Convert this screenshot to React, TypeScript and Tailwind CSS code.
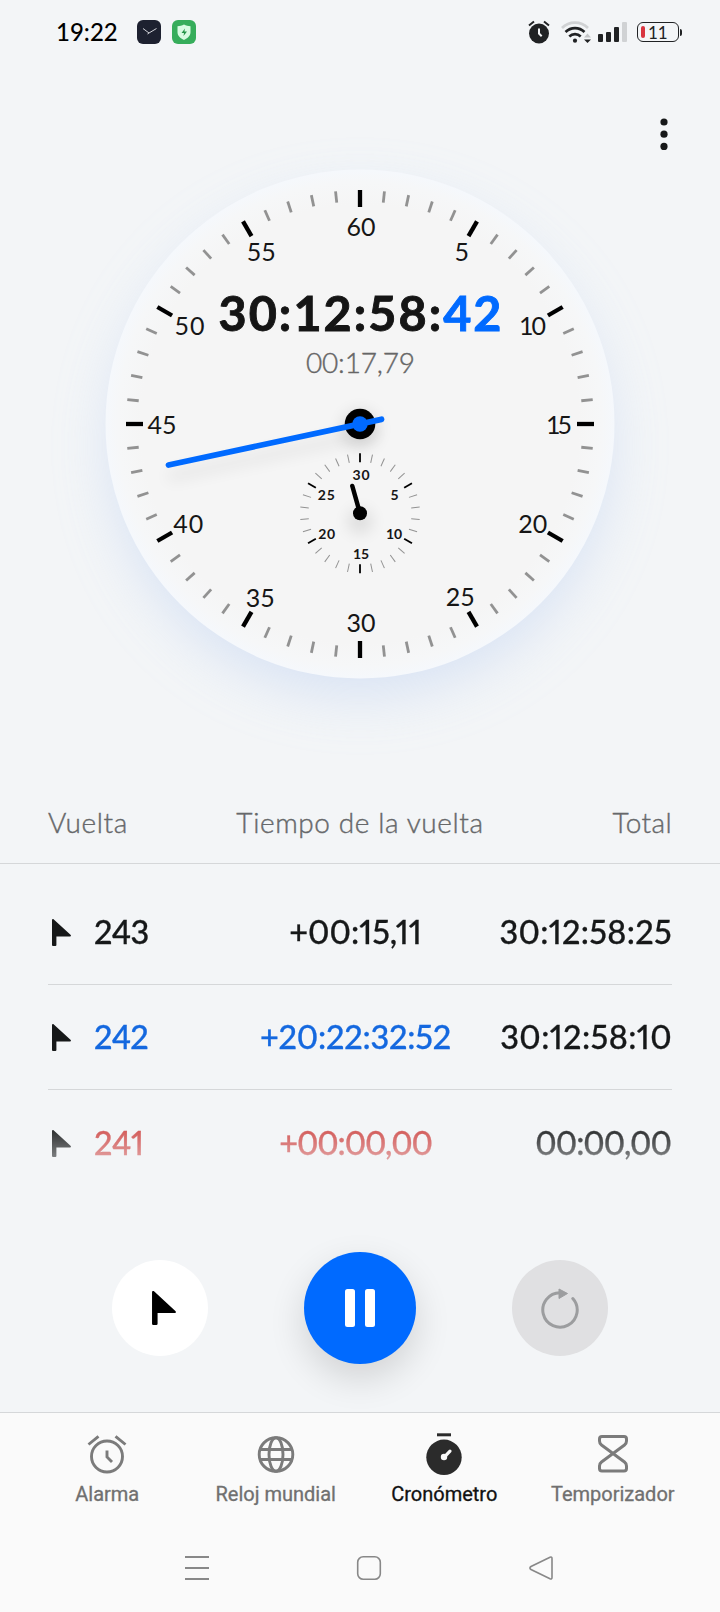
import React from 'react';

type Mark = { text: string; x: number; y: number; width: number };

// Dial coordinates: the svg is 720x610, the main hub sits at (360, 264)
const CX = 360;
const CY = 264;
const SUB_CY = 353.3;

const dialNumbers: Mark[] = [
  { text: '60', x: 361, y: 67.3, width: 29 },
  { text: '5', x: 461.7, y: 92.3, width: 14 },
  { text: '10', x: 532.5, y: 166.3, width: 27 },
  { text: '15', x: 559, y: 265.3, width: 26 },
  { text: '20', x: 532.7, y: 364.3, width: 29 },
  { text: '25', x: 460.3, y: 437.3, width: 29 },
  { text: '30', x: 361, y: 463.3, width: 29 },
  { text: '35', x: 260.3, y: 438.3, width: 29 },
  { text: '40', x: 188.3, y: 364.3, width: 30 },
  { text: '45', x: 162, y: 265.3, width: 29 },
  { text: '50', x: 189.5, y: 166.3, width: 30 },
  { text: '55', x: 261.3, y: 92.3, width: 29 },
];

const subNumbers: Mark[] = [
  { text: '30', x: 361, y: 315.2, width: 17 },
  { text: '5', x: 394.5, y: 335.3, width: 8 },
  { text: '10', x: 394, y: 374.3, width: 16 },
  { text: '15', x: 361, y: 394.3, width: 16 },
  { text: '20', x: 326.7, y: 374.3, width: 17 },
  { text: '25', x: 326.3, y: 335.3, width: 17 },
];

const laps = [
  { id: 1, lap: '243', time: '+00:15,11', total: '30:12:58:25', color: 'text-[#161819]', lapTracking: 'tracking-[-0.5px]', timeTracking: 'tracking-[0px]', totalTracking: 'tracking-[0.3px]' },
  { id: 2, lap: '242', time: '+20:22:32:52', total: '30:12:58:10', color: 'text-[#1468df]', lapTracking: 'tracking-[-0.5px]', timeTracking: 'tracking-[-0.2px]', totalTracking: 'tracking-[0.4px]' },
  { id: 3, lap: '241', time: '+00:00,00', total: '00:00,00', color: 'text-[#cf4a48]', lapTracking: 'tracking-[-0.2px]', timeTracking: 'tracking-[-1.1px]', totalTracking: 'tracking-[-1px] mr-px' },
];

function StatusBar() {
  return (
    <header className="flex h-16 items-center pl-14 pr-[38px]">
      <span className="w-[81px] text-[24px] leading-none font-medium text-black">19:22</span>
      <svg className="mr-[11px]" width="24" height="24" viewBox="0 0 24 24" fill="none">
        <rect width="24" height="24" rx="6" fill="#1d2130" />
        <path d="M6 8.5 12 13 19.5 8.5M12 13l-1.5 1" stroke="#e5e7eb" strokeWidth="0.9" />
      </svg>
      <svg width="24" height="24" viewBox="0 0 24 24" fill="none">
        <rect width="24" height="24" rx="6" fill="#36ad5b" />
        <path d="M12 4.500c2 1.500 4.200 1.500 6.500 1.800v6c0 3.700-2.800 6-6.500 7.700-3.700-1.700-6.500-4-6.500-7.700v-6c2.300-.3 4.500-.3 6.500-1.800Z" fill="#d8fbe2" />
        <path d="M13 8.500 9.500 13H12l-.5 3L15 11.500h-2.600Z" fill="#239447" />
      </svg>

      <div className="ml-auto flex items-center">
        <svg className="mr-[11px]" width="22" height="24" viewBox="0 0 22 24" fill="none">
          <circle cx="11" cy="13.500" r="10" fill="#202224" />
          <path d="M1 5.500 6 1.500M21 5.500l-5-4" stroke="#202224" strokeWidth="2" />
          <path d="M11 8.500v5l2.700 2.700" stroke="#f3f5f7" strokeWidth="2" />
        </svg>
        <svg className="mr-[7px]" width="30" height="24" viewBox="0 0 30 24" fill="none">
          <path d="M1 8a18.500 18.500 0 0 1 26 0" stroke="#d0d2d4" strokeWidth="2.800" />
          <path d="M4.500 12a13.500 13.500 0 0 1 19 0M8.300 16.500a8 8 0 0 1 11.400 0" stroke="#202224" strokeWidth="2.600" />
          <circle cx="14" cy="20.700" r="2.100" fill="#202224" />
          <path d="M23 17.500 26.500 13.500l3.500 4Z" fill="#c4c6c8" />
          <path d="M23 19.500h7l-3.500 3.500Z" fill="#202224" />
        </svg>
        <svg className="mr-[10px]" width="29" height="22" viewBox="0 0 29 22">
          <rect x="0" y="13" width="5" height="8" rx="1" fill="#202224" />
          <rect x="8" y="11" width="5" height="10" rx="1" fill="#202224" />
          <rect x="16" y="6" width="5" height="15" rx="1" fill="#202224" />
          <rect x="24" y="1" width="5" height="20" rx="1" fill="#d0d2d4" />
        </svg>
        <div className="flex h-5 w-[42px] items-center rounded-[6px] border-[1.5px] border-[#202224] pl-[2.5px]">
          <span className="h-3 w-[4.5px] rounded-[2px] bg-[#d8343f]" />
          <span className="ml-[3px] text-[17px] leading-none text-[#202224]">11</span>
        </div>
        <span className="ml-px h-[7px] w-[2px] rounded-r bg-[#202224]" />
      </div>
    </header>
  );
}

function Ticks({ count, cy, outer, major, minor, majorWidth, minorWidth }: {
  count: number; cy: number; outer: number; major: number; minor: number; majorWidth: number; minorWidth: number;
}) {
  return (
    <g>
      {Array.from({ length: count }, (_, i) => {
        const isMajor = i % 5 === 0;
        return (
          <line
            key={i}
            x1={CX}
            x2={CX}
            y1={cy - outer}
            y2={cy - outer + (isMajor ? major : minor)}
            stroke={isMajor ? '#000000' : '#929292'}
            strokeWidth={isMajor ? majorWidth : minorWidth}
            transform={`rotate(${(i * 360) / count} ${CX} ${cy})`}
          />
        );
      })}
    </g>
  );
}

function Dial() {
  return (
    <svg className="block overflow-visible" width="720" height="610" viewBox="0 0 720 610">
      <defs>
        <radialGradient id="face">
          <stop offset="0.86" stopColor="#f5f5f5" />
          <stop offset="0.95" stopColor="#f6f7f8" />
          <stop offset="1" stopColor="#f5f8fc" />
        </radialGradient>
        <filter id="glow" x="-30%" y="-30%" width="160%" height="160%">
          <feGaussianBlur stdDeviation="28" />
        </filter>
        <filter id="soft" x="-100%" y="-100%" width="300%" height="300%">
          <feGaussianBlur stdDeviation="8" />
        </filter>
      </defs>

      <circle cx={CX} cy={CY + 22} r="248" fill="#cddbf3" opacity="0.75" filter="url(#glow)" />
      <circle cx={CX} cy={CY} r="254.500" fill="url(#face)" />

      <Ticks count={60} cy={CY} outer={234} major={17} minor={11.5} majorWidth={4.3} minorWidth={2.8} />
      <g fontSize="25" fill="#161616" textAnchor="middle">
        {dialNumbers.map((n) => (
          <text key={n.text} x={n.x} y={n.y + 9} textLength={n.width}>{n.text}</text>
        ))}
      </g>

      <text x="218.500" y="171" fontSize="48.500" fontWeight="700" fill="#151515" stroke="#151515" strokeWidth="0.900" textLength="283">
        30:12:58:<tspan fill="#006aff" stroke="#006aff">42</tspan>
      </text>
      <text x="306" y="213" fontSize="28" fontWeight="300" fill="#666666" stroke="#666666" strokeWidth="0.400" textLength="109">00:17,79</text>

      {/* Minutes sub dial */}
      <Ticks count={30} cy={SUB_CY} outer={60} major={9} minor={8.5} majorWidth={1.8} minorWidth={1} />
      <g fontSize="14" fontWeight="700" fill="#161616" textAnchor="middle">
        {subNumbers.map((n) => (
          <text key={n.text} x={n.x} y={n.y + 5} textLength={n.width}>{n.text}</text>
        ))}
      </g>
      <circle cx={CX} cy={SUB_CY + 8} r="12" fill="#000000" opacity="0.1" filter="url(#soft)" />
      <line x1={CX} y1={SUB_CY} x2="352.300" y2="326" stroke="#000000" strokeWidth="4.500" strokeLinecap="round" />
      <circle cx={CX} cy={SUB_CY} r="7" fill="#000000" />

      {/* Seconds hand */}
      <line x1="168" y1="317" x2="376" y2="272" stroke="#000000" strokeWidth="8" opacity="0.08" filter="url(#soft)" />
      <circle cx={CX} cy={CY + 5} r="18" fill="#000000" opacity="0.12" filter="url(#soft)" />
      <circle cx={CX} cy={CY} r="15.300" fill="#000000" />
      <circle cx={CX} cy={CY} r="7.700" fill="#006aff" />
      <line x1="168.500" y1="305" x2="381.500" y2="259.300" stroke="#006aff" strokeWidth="5.800" strokeLinecap="round" />
    </svg>
  );
}

function Flag({ className }: { className: string }) {
  return (
    <svg className={className} viewBox="0 0 19 27" fill="currentColor">
      <path d="M0 1C0 0 1 -.3 1.800 .4L18.500 15.800C19.300 16.600 19 17.500 18 17.500H4.400V26Q4.400 27 3.400 27H1Q0 27 0 26Z" />
    </svg>
  );
}

function LapList() {
  return (
    <section className="proportional-nums">
      <div className="grid h-[94px] grid-cols-[150px_1fr_150px] items-center border-b border-[#d5d7d9] px-12 pt-[10px] text-[28px] font-light text-[#66686a] [-webkit-text-stroke:0.4px_#66686a]">
        <span className="tracking-[0.6px]">Vuelta</span>
        <span className="text-center tracking-[0.6px] whitespace-nowrap">Tiempo de la vuelta</span>
        <span className="text-right tracking-[0.4px]">Total</span>
      </div>
      <div className="h-[326px] overflow-hidden px-12 pt-4 [mask-image:linear-gradient(to_bottom,black_258px,transparent_334px)]">
        {laps.map((l) => (
          <div key={l.id} className="flex h-[105px] items-center border-b border-[#d5d7d9] pt-px text-[32.5px] font-medium text-[#161819] last:border-b-0">
            <Flag className="ml-1 h-[27px] w-[19px] shrink-0" />
            <span className={`ml-[23px] w-[121px] shrink-0 [-webkit-text-stroke:0.3px_currentColor] ${l.lapTracking} ${l.color}`}>{l.lap}</span>
            <span className={`w-[281px] shrink-0 text-center whitespace-nowrap [-webkit-text-stroke:0.3px_currentColor] ${l.timeTracking} ${l.color}`}>{l.time}</span>
            <span className={`ml-auto whitespace-nowrap [-webkit-text-stroke:0.3px_currentColor] ${l.totalTracking}`}>{l.total}</span>
          </div>
        ))}
      </div>
    </section>
  );
}

function Controls() {
  return (
    <div className="flex h-[222px] items-center justify-between px-28 pt-[14px]">
      <button className="flex size-24 items-center justify-center rounded-full bg-white text-black">
        <Flag className="ml-2 h-[34px] w-6" />
      </button>
      <button className="flex size-28 items-center justify-center gap-[10px] rounded-full bg-[#006aff] shadow-[0_14px_36px_rgba(0,0,0,0.14)]">
        <span className="h-[38px] w-[10px] rounded-[2.5px] bg-white" />
        <span className="h-[38px] w-[10px] rounded-[2.5px] bg-white" />
      </button>
      <button className="flex size-24 items-center justify-center rounded-full bg-[#e0e0e2]">
        <svg width="44" height="44" viewBox="0 0 44 44" fill="none">
          <path d="M34.800 12.500A17.200 17.200 0 1 1 22 6.800" stroke="#9c9d9f" strokeWidth="3" strokeLinecap="round" />
          <path d="M21 3 29.500 7.500 21 12.500Z" fill="#9c9d9f" stroke="#9c9d9f" strokeWidth="1" strokeLinejoin="round" />
        </svg>
      </button>
    </div>
  );
}

function TabBar() {
  return (
    <nav className="grid h-[111px] grid-cols-4 border-t border-[#d5d7d9] px-[23px] pt-5 font-['Roboto',sans-serif] text-[20px] text-[#707070] [-webkit-text-stroke:0.3px_currentColor]">
      <div className="flex flex-col items-center">
        <svg width="44" height="44" viewBox="0 0 44 44" fill="none" stroke="#7b7b7b" strokeWidth="2.900">
          <circle cx="22" cy="23.500" r="15.500" />
          <path d="M22 17.500v6.500l5 5" />
          <path d="M3.500 11.500 13.500 3.300M40.500 11.500 30.500 3.300" />
        </svg>
        <span className="mt-[5px] leading-6">Alarma</span>
      </div>
      <div className="flex flex-col items-center">
        <svg width="44" height="44" viewBox="0 0 44 44" fill="none" stroke="#7b7b7b" strokeWidth="2.900">
          <circle cx="22" cy="21.500" r="16.800" />
          <ellipse cx="22" cy="21.500" rx="7" ry="16.800" />
          <path d="M6 16.500h32M6 26.500h32" />
        </svg>
        <span className="mt-[5px] leading-6">Reloj mundial</span>
      </div>
      <div className="flex flex-col items-center text-[#111111]">
        <svg width="44" height="44" viewBox="0 0 44 44" fill="none">
          <path d="M15 1.800h14" stroke="#2b2b2b" strokeWidth="3" />
          <circle cx="22" cy="24.300" r="17.700" fill="#2b2b2b" />
          <path d="M22 24.300 28 18.100" stroke="#fafafa" strokeWidth="3.200" strokeLinecap="round" />
          <circle cx="22" cy="24" r="3.200" fill="#fafafa" />
        </svg>
        <span className="mt-[5px] leading-6">Cronómetro</span>
      </div>
      <div className="flex flex-col items-center">
        <svg width="44" height="44" viewBox="0 0 44 44" fill="none" stroke="#7b7b7b" strokeWidth="3" strokeLinejoin="round">
          <path d="M11 3.500H33Q35.500 3.500 35.500 6V8Q35.500 10.500 33.500 12L10.500 29Q8.500 30.500 8.500 33V35.500Q8.500 38 11 38H33Q35.500 38 35.500 35.500V33Q35.500 30.500 33.500 29L10.500 12Q8.500 10.500 8.500 8V6Q8.500 3.500 11 3.500Z" />
        </svg>
        <span className="mt-[5px] leading-6">Temporizador</span>
      </div>
    </nav>
  );
}

function SystemNav() {
  return (
    <div className="flex h-[89px] items-center justify-between pr-[166px] pl-[184px]">
      <svg width="26" height="26" viewBox="0 0 26 26" fill="none" stroke="#888888" strokeWidth="1.800">
        <path d="M1 2h24M1 13h24M1 24h24" />
      </svg>
      <svg width="26" height="26" viewBox="0 0 26 26" fill="none" stroke="#888888" strokeWidth="1.600">
        <rect x="1.700" y="1.700" width="22.600" height="22.600" rx="5.500" />
      </svg>
      <svg width="26" height="26" viewBox="0 0 26 26" fill="none" stroke="#888888" strokeWidth="1.600">
        <path d="M22 2.200Q24 1.500 24 3.500V22.500Q24 24.500 22 23.700L3 14.500Q.8 13 3 11.500Z" />
      </svg>
    </div>
  );
}

export default function App() {
  return (
    <div className="flex h-[1612px] w-[720px] flex-col overflow-hidden bg-[#f3f5f7] font-['Lato',sans-serif]">
      <StatusBar />
      <div className="flex h-24 justify-end pt-[54px] pr-[52px]">
        <svg width="8" height="32" viewBox="0 0 8 32" fill="#161819">
          <circle cx="4" cy="4" r="3.600" />
          <circle cx="4" cy="16.200" r="3.600" />
          <circle cx="4" cy="28.400" r="3.600" />
        </svg>
      </div>
      <Dial />
      <LapList />
      <Controls />
      <footer className="bg-[#fafafa]">
        <TabBar />
        <SystemNav />
      </footer>
    </div>
  );
}
